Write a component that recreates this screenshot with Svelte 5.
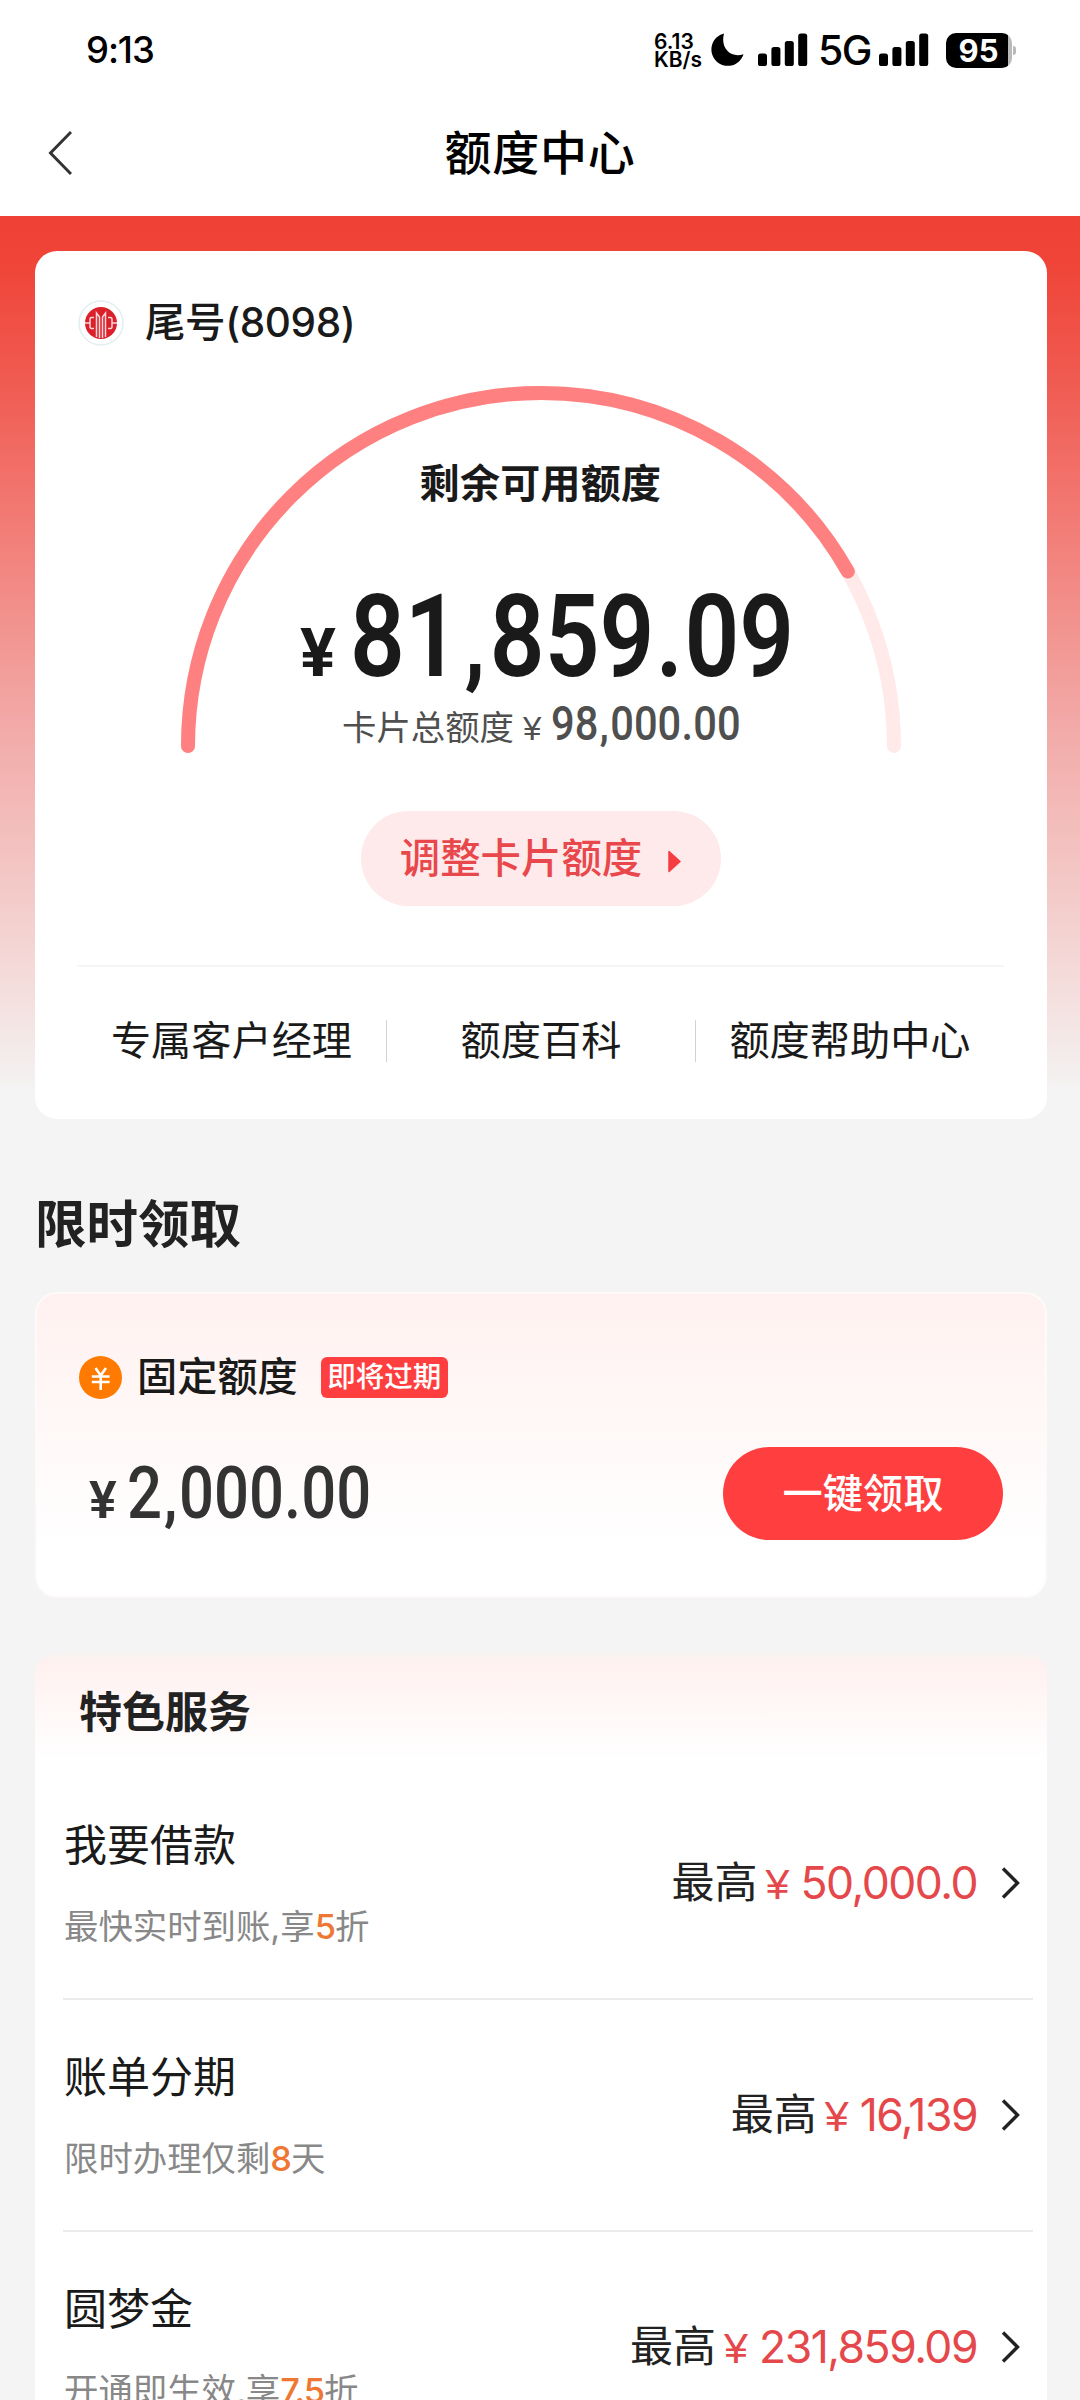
<script>
  const links = ['专属客户经理', '额度百科', '额度帮助中心'];
  const services = [
    { name: '我要借款', before: '最快实时到账,享', hot: '5', after: '折', amount: '50,000.0' },
    { name: '账单分期', before: '限时办理仅剩', hot: '8', after: '天', amount: '16,139' },
    { name: '圆梦金', before: '开通即生效,享', hot: '7.5', after: '折', amount: '231,859.09' }
  ];
  const bars = [12.5, 19, 25, 32.5];
  const used = 81859.09 / 98000;
</script>

{#snippet signal()}
  <svg class="signal" width="50" height="33" viewBox="0 0 50 33">
    {#each bars as h, i}
      <rect x={i * 13.4} y={33 - h} width="9" height={h} rx="2.6" />
    {/each}
  </svg>
{/snippet}

{#snippet digits(value)}
  <span class="digits">{#each value.split('') as c}<span class:punct={c === ',' || c === '.'} class:comma={c === ','}>{c}</span>{/each}</span>
{/snippet}

<div class="page">
  <header>
    <div class="status">
      <span class="time">9:13</span>
      <div class="indicators">
        <div class="speed"><span>6.13</span><span>KB/s</span></div>
        <svg class="moon" width="33" height="34" viewBox="0 0 33 34">
          <path d="M13 .5A16.4 16.4 0 1 0 32.5 21.200C20 25.500 9 15.500 13 .5Z" />
        </svg>
        {@render signal()}
        <span class="net">5G</span>
        {@render signal()}
        <div class="battery"><span>95</span></div>
      </div>
    </div>
    <div class="nav">
      <svg class="back" width="26" height="46" viewBox="0 0 26 46">
        <path d="M25 2L4.500 23L25 44" />
      </svg>
      <h1>额度中心</h1>
    </div>
  </header>

  <main>
    <section class="card limit">
      <div class="account">
        <svg width="46" height="46" viewBox="0 0 46 46">
          <circle cx="23" cy="23" r="22" fill="#fff" stroke="#e3eef1" stroke-width="1.500" />
          <circle cx="23" cy="23" r="16" fill="#d9202b" />
          <g fill="none" stroke="#fbd5d7" stroke-width="1.500">
            <path d="M16 17.500H13.500Q12 17.500 12 19.500V26.500Q12 28.500 13.500 28.500H16M7 23H12" />
            <path d="M30 17.500H32.500Q34 17.500 34 19.500V26.500Q34 28.500 32.500 28.500H30M39 23H34" />
            <path d="M18.500 37V13L21.500 17V38M27.500 37V13L24.500 17V38" />
          </g>
        </svg>
        <span>尾号(8098)</span>
      </div>

      <div class="gauge">
        <svg class="arc" width="724" height="374" viewBox="0 0 724 374">
          <path class="track" d="M9 362A353 353 0 0 1 715 362" />
          <path class="value" d="M9 362A353 353 0 0 1 715 362" pathLength="1" stroke-dasharray="{used} 2" />
        </svg>
        <div class="readout">
          <p class="label">剩余可用额度</p>
          <p class="balance"><span class="yen">¥</span>{@render digits('81,859.09')}</p>
          <p class="total"><span>卡片总额度</span><span class="yen">¥</span>{@render digits('98,000.00')}</p>
        </div>
      </div>

      <button class="adjust">
        调整卡片额度
        <svg width="13" height="23" viewBox="0 0 13 23"><path d="M1 1.500L12 11.500L1 21.500Z" /></svg>
      </button>

      <nav class="links">
        {#each links as link}<span>{link}</span>{/each}
      </nav>
    </section>

    <h2>限时领取</h2>

    <section class="card offer">
      <div class="offer-head">
        <svg width="43" height="43" viewBox="0 0 43 43">
          <circle cx="21.500" cy="21.500" r="21.500" fill="#ff7a00" />
          <path d="M16.500 12L21.700 19.500L27 12M21.700 19.500V34M12.800 20.500H30.600M12.800 26H30.600" fill="none" stroke="#fff" stroke-width="2.600" />
        </svg>
        <span class="kind">固定额度</span>
        <span class="tag">即将过期</span>
      </div>
      <div class="offer-body">
        <p class="sum"><span class="yen">¥</span>{@render digits('2,000.00')}</p>
        <button class="claim">一键领取</button>
      </div>
    </section>

    <section class="card services">
      <h3>特色服务</h3>
      {#each services as s}
        <div class="row">
          <div class="info">
            <p class="name">{s.name}</p>
            <p class="desc">{s.before}<em>{s.hot}</em>{s.after}</p>
          </div>
          <div class="max">
            <span>最高</span><span class="price"><span class="yen">¥</span>{s.amount}</span>
            <svg width="20" height="34" viewBox="0 0 20 34"><path d="M3 2.500L17.500 17L3 31.500" /></svg>
          </div>
        </div>
      {/each}
    </section>
  </main>
</div>

<style>
  :global(body) { background: #f4f4f4; }
  * { box-sizing: border-box; margin: 0; padding: 0; }
  svg { display: block; flex: none; }
  button { border: 0; font: inherit; }
  .page {
    width: 1080px;
    height: 2400px;
    overflow: hidden;
    background: #f4f4f4;
    color: #1a1a1a;
    font-family: Inter, "Noto Sans CJK SC", sans-serif;
    white-space: nowrap;
  }
  header { height: 216px; background: #fff; color: #000; }
  .status {
    height: 100px;
    padding: 0 64px 0 86px;
    display: flex;
    align-items: center;
    justify-content: space-between;
  }
  .time { font-size: 36.500px; font-weight: 500; letter-spacing: -1.1px; line-height: 100px; }
  .indicators { display: flex; align-items: center; height: 100px; }
  .speed {
    display: flex; flex-direction: column; width: 57px;
    font-size: 21px; font-weight: 600; line-height: 18.500px;
    padding-top: 2px;
  }
  .moon { margin-right: 14px; }
  .signal { margin-top: -1px; }
  .net { width: 71px; padding-left: 10px; font-size: 41px; font-weight: 500; letter-spacing: -1.500px; line-height: 100px; }
  .battery {
    position: relative;
    width: 66px; height: 35px; margin: 0 4px 0 17px;
    border-radius: 10px;
    background: linear-gradient(90deg, #000 62px, #b9b9b9 62px);
    color: #fff; text-align: center;
    font-size: 31px; font-weight: 700; line-height: 35px; padding-right: 1px;
  }
  .battery::after {
    content: ""; position: absolute; left: 67px; top: 13px;
    width: 3px; height: 9px; border-radius: 0 3px 3px 0; background: #b9b9b9;
  }
  .nav { display: grid; grid-template-columns: 100px 1fr 100px; height: 106px; align-items: center; }
  .back { margin-left: 46px; }
  .back path { fill: none; stroke: #333; stroke-width: 3; }
  h1 { text-align: center; font-size: 47px; font-weight: 500; letter-spacing: .8px; line-height: 104px; }

  main {
    padding: 35px 33px 0 35px;
    background: linear-gradient(#ef4135 0, #f04438 45px, #f05a50 160px, #f27c76 310px, #f2aaa8 510px, #f3cbc9 680px, #f4e3e2 800px, #f4f4f4 880px);
  }
  .card { border-radius: 22px; background: #fff; }
  .limit { height: 868px; padding: 0 43px 0 42px; }
  .account { display: flex; align-items: center; gap: 21px; height: 134px; padding: 10px 0 0 1px; font-size: 40.500px; font-weight: 500; line-height: 46px; letter-spacing: -.4px; }
  .account span { margin-top: -1px; }
  .gauge { display: grid; justify-items: center; height: 374px; margin-top: -1px; }
  .gauge > * { grid-area: 1 / 1; }
  .arc path { fill: none; stroke-width: 14; stroke-linecap: round; }
  .arc .track { stroke: #ffe9e9; }
  .arc .value { stroke: #ff8080; }
  .readout { width: 100%; padding-top: 69px; }
  .label { text-align: center; font-size: 40px; font-weight: 600; line-height: 62px; letter-spacing: .3px; }

  .digits { display: inline-flex; align-items: baseline; font-family: Roboto, sans-serif; transform-origin: 0 50%; }
  .digits > span { flex: none; text-align: center; }
  .digits > .comma { font-size: .8em; font-weight: 900; }
  .balance { display: flex; align-items: baseline; height: 128px; margin-top: 58px; padding-left: 223px; line-height: 128px; font-weight: 600; }
  .balance .yen { width: 50px; font: 700 67px/100px Roboto, sans-serif; }
  .balance .digits { font-size: 115px; transform: scaleX(.835); }
  .balance .punct { width: 36px; }
  .total { display: flex; align-items: baseline; height: 46px; padding-left: 265px; color: #4f4f4f; font-size: 34.400px; line-height: 46px; }
  .total .yen { width: 28px; margin-left: 9px; font-family: "Liberation Sans", sans-serif; font-size: 33px; }
  .total .digits { font-size: 49px; font-weight: 500; transform: scaleX(.85); }
  .total .punct { width: 14px; }

  .adjust {
    display: flex; align-items: center; justify-content: center; gap: 26px;
    width: 360px; height: 95px; margin: 53px auto 0; border-radius: 48px;
    background: #ffeaeb; color: #e8474b;
    font-size: 40.400px; font-weight: 500; line-height: 93px;
  }
  .adjust svg { margin-top: 5px; }
  .adjust path { fill: #f63d42; stroke: #f63d42; stroke-width: 1.500; stroke-linejoin: round; }
  .links { display: grid; grid-template-columns: repeat(3, 1fr); align-items: center; margin-top: 59px; padding-top: 53px; border-top: 2px solid #f6f6f6; }
  .links span { text-align: center; height: 42px; font-size: 40.200px; line-height: 42px; }
  .links span + span { border-left: 1px solid #d2d2d2; }

  h2 { height: 173px; padding-top: 71px; font-size: 51.500px; font-weight: 600; line-height: 68px; color: #222; }
  .offer { height: 306px; padding: 62px 42px 0 42px; border: 2px solid #fffafa; background: linear-gradient(#fff1f0, #fff 85%); }
  .offer-head { display: flex; align-items: center; height: 43px; }
  .kind { margin: -1px 0 0 15px; font-size: 40.200px; font-weight: 500; line-height: 44px; }
  .tag { width: 127px; height: 41px; margin-left: 23px; border-radius: 6px; background: #ff3e40; color: #fff; text-align: center; font-size: 28.500px; font-weight: 500; line-height: 39px; }
  .offer-body { display: flex; justify-content: space-between; margin-top: 48px; }
  .sum { display: flex; align-items: baseline; padding-left: 10px; line-height: 94px; color: #333; font-weight: 500; }
  .sum .yen { width: 38px; font: 600 52px/80px Roboto, sans-serif; }
  .sum .digits { font-size: 72px; transform: scaleX(.855); }
  .sum .punct { width: 20px; }
  .claim { width: 280px; height: 93px; border-radius: 47px; background: #ff3e40; color: #fff; font-size: 40.200px; font-weight: 500; line-height: 88px; }

  .services { height: 900px; margin-top: 55px; padding: 0 14px 0 28px; background: linear-gradient(#f7f3f3 0, #fff1f0 10px, #fff 108px); }
  h3 { height: 115px; padding: 0 0 0 16px; font-size: 43px; font-weight: 600; line-height: 118px; color: #222; }
  .row { display: flex; justify-content: space-between; height: 232px; padding: 50px 13px 0 1px; border-bottom: 2px solid #ececec; }
  .name { font-size: 43px; line-height: 54px; }
  .desc { margin-top: 32px; font-size: 34.400px; line-height: 46px; color: #888; }
  .desc em { font-style: normal; font-weight: 500; letter-spacing: -1px; color: #ee7733; }
  .max { display: flex; align-items: center; height: 60px; margin-top: 35px; font-size: 43px; line-height: 60px; color: #222; }
  .max > span:first-child { margin-top: -2px; }
  .price { margin: 1px 0 0 8px; color: #e5484b; font-size: 44.500px; letter-spacing: -1.500px; }
  .price .yen { display: inline-block; width: 35px; font-family: "Liberation Sans", sans-serif; font-size: 43px; }
  .max svg { margin-left: 23px; }
  .max path { fill: none; stroke: #222; stroke-width: 3.400; }
</style>
